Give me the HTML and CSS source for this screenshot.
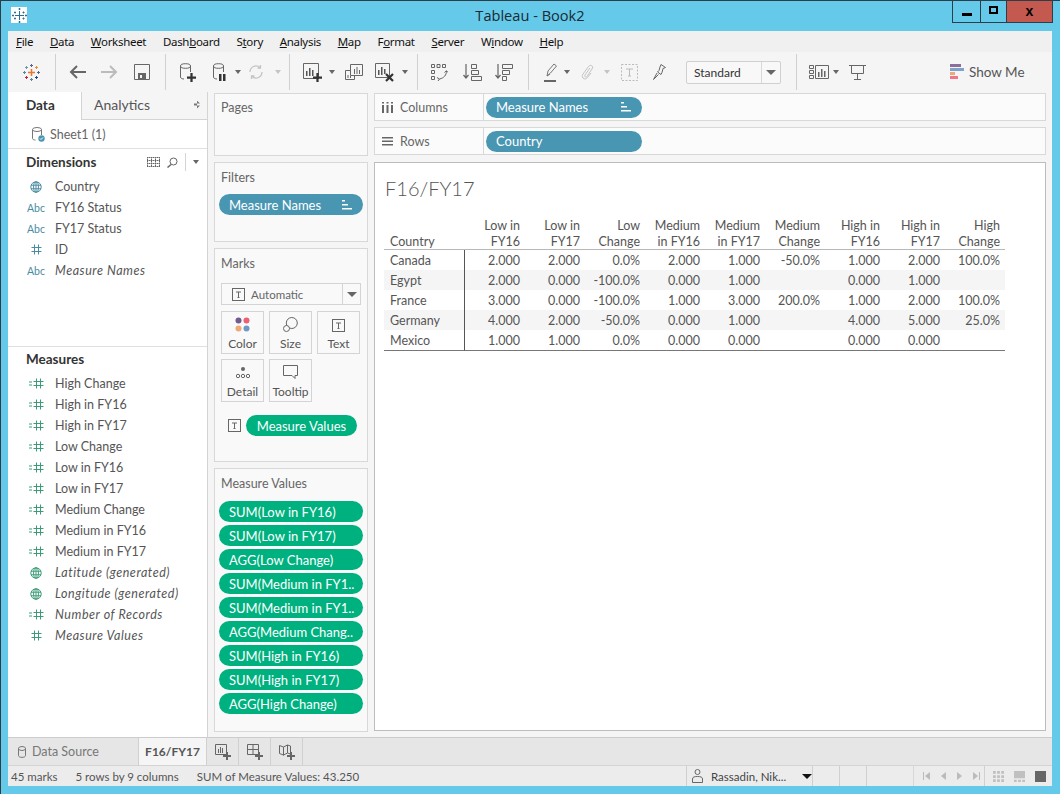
FILE: index.html
```html
<!DOCTYPE html>
<html lang="en">
<head>
<meta charset="utf-8">
<title>Tableau - Book2</title>
<link rel="stylesheet" href="styles.css">
</head>
<body>
<svg class="defs" width="0" height="0">
  <symbol id="globe" viewBox="0 0 12 12"><g fill="none" stroke="currentColor" stroke-width="1"><circle cx="6" cy="6" r="5.2"/><ellipse cx="6" cy="6" rx="2.4" ry="5.2"/><path d="M1 4.2h10M1 7.8h10M6 .8v10.4"/></g></symbol>
  <symbol id="hash" viewBox="0 0 11 11"><path d="M3.5 .5v10M7.5 .5v10M.5 3.5h10M.5 7.5h10" fill="none" stroke="currentColor"/></symbol>
  <symbol id="mhash" viewBox="0 0 15 11"><path d="M0 4h3M0 7h3M7.5 .5v10M11.5 .5v10M4.500 3.500h10M4.500 7.500h10" fill="none" stroke="currentColor"/></symbol>
  <symbol id="sort" viewBox="0 0 12 10"><path d="M1 0h3v1.500H1zM1 4h6v1.500H1zM1 8h10v1.500H1z" fill="currentColor"/></symbol>
  <symbol id="tbox" viewBox="0 0 13 13"><rect x=".5" y=".5" width="12" height="12" fill="none" stroke="currentColor"/><path d="M4 4h5M6.500 4v5.500M5.500 9.500h2" fill="none" stroke="currentColor"/></symbol>
  <symbol id="plus" viewBox="0 0 8 8"><path d="M3 0h2v3h3v2H5v3H3V5H0V3h3z" fill="currentColor"/></symbol>
  <symbol id="drum" viewBox="0 0 14 19"><g fill="none" stroke="currentColor"><ellipse cx="6.500" cy="3" rx="5" ry="2.300"/><path d="M1.500 3v11c0 1.500 2 2 3.500 2M11.500 3v6"/></g></symbol>
</svg>

<div class="window">
  <header class="titlebar">
    <span class="app-icon"><svg width="15" height="15" viewBox="0 0 15 15"><path d="M7.500 3v9M3 7.500h9M3 3.500v2M2 4.500h2M11.500 3.500v2M10.500 4.500h2M3 9.500v2M2 10.500h2M11.500 9.500v2M10.500 10.500h2M7.500 0v2M6.500 1h2M7.500 13v2M6.500 14h2M0 7.500h2M1 6.500v2M13 7.500h2M14 6.500v2" stroke="#2f6d93" fill="none"/></svg></span>
    <h1 class="title">Tableau - Book2</h1>
    <div class="winctl">
      <span class="wbtn w-min"><i class="g-min"></i></span>
      <span class="wbtn w-max"><i class="g-max"></i></span>
      <span class="wbtn w-close">x</span>
    </div>
  </header>

  <div class="client">
    <nav class="menubar">
      <span class="mi"><u>F</u>ile</span>
      <span class="mi"><u>D</u>ata</span>
      <span class="mi"><u>W</u>orksheet</span>
      <span class="mi">Dash<u>b</u>oard</span>
      <span class="mi">S<u>t</u>ory</span>
      <span class="mi"><u>A</u>nalysis</span>
      <span class="mi"><u>M</u>ap</span>
      <span class="mi">F<u>o</u>rmat</span>
      <span class="mi"><u>S</u>erver</span>
      <span class="mi">W<u>i</u>ndow</span>
      <span class="mi"><u>H</u>elp</span>
    </nav>

    <div class="toolbar">
      <svg class="t t-logo" width="17" height="17" viewBox="0 0 17 17"><g fill="none" stroke-width="1">
        <path d="M8.500 5v7M5 8.500h7" stroke="#e8762d" stroke-width="1.500"/>
        <path d="M8.500 0v3M7 1.500h3" stroke="#5b6591"/>
        <path d="M8.500 14v3M7 15.500h3" stroke="#5b879b"/>
        <path d="M0 8.500h3M1.500 7v3" stroke="#59879b"/>
        <path d="M14 8.500h3M15.500 7v3" stroke="#5b6591"/>
        <path d="M3.500 2v3M2 3.500h3" stroke="#7099a6"/>
        <path d="M13.500 2v3M12 3.500h3" stroke="#eb912b"/>
        <path d="M3.500 12v3M2 13.500h3" stroke="#c72035"/>
        <path d="M13.500 12v3M12 13.500h3" stroke="#1f457e"/></g></svg>
      <i class="sep s1"></i>
      <svg class="t t-back" width="17" height="14" viewBox="0 0 17 14"><path d="M17 7H2M8 1L2 7l6 6" fill="none" stroke="#666" stroke-width="2"/></svg>
      <svg class="t t-fwd" width="17" height="14" viewBox="0 0 17 14"><path d="M0 7h15M9 1l6 6-6 6" fill="none" stroke="#bbb" stroke-width="2"/></svg>
      <svg class="t t-save" width="16" height="16" viewBox="0 0 16 16"><path d="M.5 .5h15v15H.5z" fill="none" stroke="#666"/><path d="M4 9h8v6H4z" fill="#666"/><path d="M6 11h2v3H6z" fill="#f5f5f5"/></svg>
      <i class="sep s2"></i>
      <svg class="t t-db" width="17" height="19" viewBox="0 0 17 19"><use href="#drum" width="14" height="19" class="c-dark"/><use href="#plus" x="8" y="10" width="9" height="9" class="c-black"/></svg>
      <svg class="t t-dbp" width="14" height="19" viewBox="0 0 14 19"><use href="#drum" width="14" height="19" class="c-dark"/><path d="M7 11h2.500v7H7zM11 11h2.500v7H11z" fill="#333"/></svg>
      <i class="caret c1"></i>
      <svg class="t t-ref" width="16" height="16" viewBox="0 0 16 16"><path d="M2 8a6 6 0 0 1 10-4.500M14 8a6 6 0 0 1-10 4.500M12.500 1v3h-3M3.500 15v-3h3" fill="none" stroke="#c4c4c4" stroke-width="1.300"/></svg>
      <i class="caret c2 off"></i>
      <i class="sep s3"></i>
      <svg class="t t-new" width="19" height="19" viewBox="0 0 19 19"><path d="M.5 .5h15v15H.5z" fill="none" stroke="#666"/><path d="M3 8h1.500v5H3zM6 5h1.500v8H6zM9 7h1.500v6H9z" fill="#555"/><use href="#plus" x="10" y="10" width="9" height="9" class="c-black"/></svg>
      <i class="caret c3"></i>
      <svg class="t t-dup" width="18" height="17" viewBox="0 0 18 17"><path d="M5.500 .5h12v11h-12zM.5 6.500h5M.5 6.500v9h9v-4" fill="none" stroke="#666"/><path d="M9 5h1v5H9zM11.500 3h1v7h-1zM14 6h1v4h-1zM2.500 11h1v3h-1zM5 12h1v2H5z" fill="#666"/></svg>
      <svg class="t t-clr" width="20" height="19" viewBox="0 0 20 19"><path d="M.5 .5h14v14H.5z" fill="none" stroke="#666"/><path d="M3 7h1.500v5H3zM6 4h1.500v8H6zM9 6h1.500v5H9z" fill="#555"/><path d="M11 11l7 7M18 11l-7 7" stroke="#333" stroke-width="2.200"/></svg>
      <i class="caret c4"></i>
      <i class="sep s4"></i>
      <svg class="t t-swap" width="17" height="17" viewBox="0 0 17 17"><g fill="none" stroke="#666"><path d="M.5 .5h3v3h-3zM6 .5h3v3H6zM11.500 .5h3v3h-3zM.5 6.500h3v3h-3zM.5 12.500h3v3h-3z"/><path d="M15.500 7c0 4-2.500 7-7 8M6 13.500l2.500 1.500-1.500 2M13.500 8.500l2-1.800 1.500 1.800"/></g></svg>
      <svg class="t t-sa" width="19" height="17" viewBox="0 0 19 17"><g fill="none" stroke="#666"><path d="M3 0v14M.5 11l2.500 3 2.500-3" stroke-width="1.200"/><path d="M8.500 .5h5v4h-5zM8.500 6.500h7v4h-7zM8.500 12.500h10v4h-10z"/></g></svg>
      <svg class="t t-sd" width="18" height="17" viewBox="0 0 18 17"><g fill="none" stroke="#666"><path d="M3 0v14M.5 11l2.500 3 2.500-3" stroke-width="1.200"/><path d="M7.500 .5h10v4h-10zM7.500 6.500h7v4h-7zM7.500 12.500h4v4h-4z"/></g></svg>
      <i class="sep s5"></i>
      <svg class="t t-hl" width="13" height="19" viewBox="0 0 13 19"><path d="M3 13l1-5 6-7 2.500 2-6 7zM3 13l3-2" fill="none" stroke="#777"/><path d="M0 17h12v2H0z" fill="#666"/></svg>
      <i class="caret c5"></i>
      <svg class="t t-clip" width="13" height="17" viewBox="0 0 13 17"><path d="M9 4L4 11c-1 1.500 1 3 2 1.500l5-7.500c2-3-1.500-5-3.500-2.500L2 10c-2.500 3.500 2 7 4.500 3.500L10 9" fill="none" stroke="#c4c4c4"/></svg>
      <i class="caret c6 off"></i>
      <svg class="t t-annot" width="17" height="17" viewBox="0 0 17 17"><rect x=".5" y=".5" width="16" height="16" fill="none" stroke="#bbb" stroke-dasharray="2 1.500"/><path d="M5 5h7M8.500 5v7M7 12h3" fill="none" stroke="#bbb"/></svg>
      <svg class="t t-pin" width="13" height="16" viewBox="0 0 13 16"><path d="M8 .5l4.500 3-2.500 1-1 4-1 2-3.500-2.500 1.500-1.500 1-3.500zM4 9l-3.500 6.500 5-5" fill="none" stroke="#666"/></svg>
      <div class="fit"><span class="fit-label">Standard</span><span class="fit-arrow"><i class="caret big"></i></span></div>
      <i class="sep s6"></i>
      <svg class="t t-card" width="20" height="14" viewBox="0 0 20 14"><g fill="none" stroke="#666"><path d="M.5 .5h4v3h-4zM.5 5.500h4v3h-4zM.5 10.500h4v3h-4zM6.500 .5h13v13h-13z"/></g><path d="M9 7h1.500v5H9zM12 4h1.500v8H12zM15 6h1.500v6H15z" fill="#666"/></svg>
      <i class="caret c7"></i>
      <svg class="t t-pres" width="17" height="16" viewBox="0 0 17 16"><g fill="none" stroke="#666"><path d="M2.500 1.500h12v8h-12zM0 1.500h17M8.500 9.500V15M5 15.500h7"/></g></svg>
      <span class="showme">
        <svg width="14" height="16" viewBox="0 0 14 16"><path d="M0 0h11v3H0z" fill="#8a6f9b"/><path d="M0 4h14v3H0z" fill="#7fa2c8"/><path d="M0 8h5v3H0z" fill="#f0a878"/><path d="M0 12h8v3H0z" fill="#f2768a"/></svg>
        Show Me
      </span>
    </div>

    <main class="main">
      <aside class="datapane">
        <div class="tabs">
          <span class="tab active">Data</span>
          <span class="tab">Analytics<i class="updown"></i></span>
        </div>
        <div class="source">
          <svg width="15" height="15" viewBox="0 0 15 15"><g fill="none" stroke="#777"><ellipse cx="6" cy="2.500" rx="4.500" ry="2"/><path d="M1.500 2.500v9c0 1 1.500 1.500 3 1.500M10.500 2.500V8"/></g><circle cx="10.500" cy="11.500" r="3.200" fill="#4996b2"/><path d="M9 11.500l1 1 2-2" stroke="#fff" fill="none"/></svg>
          <span>Sheet1 (1)</span>
        </div>
        <section class="dims">
          <div class="pane-head">
            <h2>Dimensions</h2>
            <span class="head-tools">
              <svg width="13" height="11" viewBox="0 0 13 11"><path d="M0 .5h13M0 3.500h13M0 6.500h13M0 9.500h13M.5 0v10M4.500 0v10M8.500 0v10M12.500 0v10" stroke="#666" stroke-dasharray="1.500 .5" fill="none"/></svg>
              <svg width="11" height="11" viewBox="0 0 11 11"><circle cx="6.500" cy="4.500" r="3.500" fill="none" stroke="#666"/><path d="M4 7.500L.5 10.500" stroke="#666" stroke-width="1.500"/></svg>
              <i class="vline"></i>
              <i class="caret"></i>
            </span>
          </div>
          <ul class="fields dim">
            <li><span class="fi"><svg width="12" height="12"><use href="#globe"/></svg></span>Country</li>
            <li><span class="fi abc">Abc</span>FY16 Status</li>
            <li><span class="fi abc">Abc</span>FY17 Status</li>
            <li><span class="fi"><svg width="11" height="11"><use href="#hash"/></svg></span>ID</li>
            <li class="gen"><span class="fi abc">Abc</span>Measure Names</li>
          </ul>
        </section>
        <section class="meas">
          <div class="pane-head"><h2>Measures</h2></div>
          <ul class="fields mea">
            <li><span class="fi"><svg width="15" height="11"><use href="#mhash"/></svg></span>High Change</li>
            <li><span class="fi"><svg width="15" height="11"><use href="#mhash"/></svg></span>High in FY16</li>
            <li><span class="fi"><svg width="15" height="11"><use href="#mhash"/></svg></span>High in FY17</li>
            <li><span class="fi"><svg width="15" height="11"><use href="#mhash"/></svg></span>Low Change</li>
            <li><span class="fi"><svg width="15" height="11"><use href="#mhash"/></svg></span>Low in FY16</li>
            <li><span class="fi"><svg width="15" height="11"><use href="#mhash"/></svg></span>Low in FY17</li>
            <li><span class="fi"><svg width="15" height="11"><use href="#mhash"/></svg></span>Medium Change</li>
            <li><span class="fi"><svg width="15" height="11"><use href="#mhash"/></svg></span>Medium in FY16</li>
            <li><span class="fi"><svg width="15" height="11"><use href="#mhash"/></svg></span>Medium in FY17</li>
            <li class="gen"><span class="fi"><svg width="12" height="12"><use href="#globe"/></svg></span>Latitude (generated)</li>
            <li class="gen"><span class="fi"><svg width="12" height="12"><use href="#globe"/></svg></span>Longitude (generated)</li>
            <li class="gen"><span class="fi"><svg width="15" height="11"><use href="#mhash"/></svg></span>Number of Records</li>
            <li class="gen"><span class="fi"><svg width="11" height="11"><use href="#hash"/></svg></span>Measure Values</li>
          </ul>
        </section>
      </aside>

      <div class="workspace">
        <div class="cards">
          <section class="card pages"><h3>Pages</h3></section>
          <section class="card filters">
            <h3>Filters</h3>
            <div class="pill blue wide">Measure Names<svg width="12" height="10"><use href="#sort"/></svg></div>
          </section>
          <section class="card marks">
            <h3>Marks</h3>
            <div class="marktype">
              <span class="mt-label"><svg width="13" height="13"><use href="#tbox"/></svg>Automatic</span>
              <span class="mt-arrow"><i class="caret big"></i></span>
            </div>
            <div class="markgrid">
              <div class="mbtn">
                <svg width="15" height="15" viewBox="0 0 15 15"><circle cx="3.500" cy="3.500" r="3" fill="#6f5b8e"/><circle cx="11.500" cy="3.500" r="3" fill="#ef5f73"/><circle cx="3.500" cy="11.500" r="3" fill="#f0a878"/><circle cx="11.500" cy="11.500" r="3" fill="#6f98c6"/></svg>
                <span>Color</span>
              </div>
              <div class="mbtn">
                <svg width="15" height="15" viewBox="0 0 15 15"><g fill="none" stroke="#666"><circle cx="8.800" cy="6" r="5.500"/><circle cx="3.500" cy="11.500" r="3" fill="#f9f9f9"/></g></svg>
                <span>Size</span>
              </div>
              <div class="mbtn">
                <svg width="13" height="13"><use href="#tbox"/></svg>
                <span>Text</span>
              </div>
              <div class="mbtn">
                <svg width="14" height="15" viewBox="0 0 14 15"><circle cx="7" cy="4" r="2" fill="#666"/><g fill="none" stroke="#666"><circle cx="2" cy="11" r="1.700"/><circle cx="7" cy="11" r="1.700"/><circle cx="12" cy="11" r="1.700"/></g></svg>
                <span>Detail</span>
              </div>
              <div class="mbtn">
                <svg width="15" height="15" viewBox="0 0 15 15"><path d="M.5 .5h14v10h-2.500v3l-3-3H.5z" fill="none" stroke="#666"/></svg>
                <span>Tooltip</span>
              </div>
            </div>
            <div class="markpill">
              <svg width="13" height="13"><use href="#tbox"/></svg>
              <div class="pill green">Measure Values</div>
            </div>
          </section>
          <section class="card mvalues">
            <h3>Measure Values</h3>
            <div class="pillstack">
              <div class="pill green wide">SUM(Low in FY16)</div>
              <div class="pill green wide">SUM(Low in FY17)</div>
              <div class="pill green wide">AGG(Low Change)</div>
              <div class="pill green wide">SUM(Medium in FY1..</div>
              <div class="pill green wide">SUM(Medium in FY1..</div>
              <div class="pill green wide">AGG(Medium Chang..</div>
              <div class="pill green wide">SUM(High in FY16)</div>
              <div class="pill green wide">SUM(High in FY17)</div>
              <div class="pill green wide">AGG(High Change)</div>
            </div>
          </section>
        </div>

        <div class="viewcol">
          <div class="shelf s-cols">
            <div class="shelf-label"><svg width="11" height="11" viewBox="0 0 11 11"><path d="M0 3h2v8H0zM4.500 3h2v8h-2zM9 3h2v8H9zM0 0h2v1.500H0zM4.500 0h2v1.500h-2zM9 0h2v1.500H9z" fill="#666"/></svg>Columns</div>
            <div class="shelf-body"><div class="pill blue shelfpill">Measure Names<svg width="12" height="10"><use href="#sort"/></svg></div></div>
          </div>
          <div class="shelf s-rows">
            <div class="shelf-label"><svg width="11" height="9" viewBox="0 0 11 9"><path d="M0 0h11v1.500H0zM0 3.500h11V5H0zM0 7h11v1.500H0z" fill="#666"/></svg>Rows</div>
            <div class="shelf-body"><div class="pill blue shelfpill">Country</div></div>
          </div>
          <section class="viz">
            <h2 class="viz-title">F16/FY17</h2>
            <table class="crosstab">
              <thead>
                <tr>
                  <th class="rowhead">Country</th>
                  <th>Low in<br>FY16</th><th>Low in<br>FY17</th><th>Low<br>Change</th>
                  <th>Medium<br>in FY16</th><th>Medium<br>in FY17</th><th>Medium<br>Change</th>
                  <th>High in<br>FY16</th><th>High in<br>FY17</th><th>High<br>Change</th>
                </tr>
              </thead>
              <tbody>
                <tr><td class="rowhead">Canada</td><td>2.000</td><td>2.000</td><td>0.0%</td><td>2.000</td><td>1.000</td><td>-50.0%</td><td>1.000</td><td>2.000</td><td>100.0%</td></tr>
                <tr><td class="rowhead">Egypt</td><td>2.000</td><td>0.000</td><td>-100.0%</td><td>0.000</td><td>1.000</td><td></td><td>0.000</td><td>1.000</td><td></td></tr>
                <tr><td class="rowhead">France</td><td>3.000</td><td>0.000</td><td>-100.0%</td><td>1.000</td><td>3.000</td><td>200.0%</td><td>1.000</td><td>2.000</td><td>100.0%</td></tr>
                <tr><td class="rowhead">Germany</td><td>4.000</td><td>2.000</td><td>-50.0%</td><td>0.000</td><td>1.000</td><td></td><td>4.000</td><td>5.000</td><td>25.0%</td></tr>
                <tr><td class="rowhead">Mexico</td><td>1.000</td><td>1.000</td><td>0.0%</td><td>0.000</td><td>0.000</td><td></td><td>0.000</td><td>0.000</td><td></td></tr>
              </tbody>
            </table>
          </section>
        </div>
      </div>
    </main>

    <div class="sheetbar">
      <span class="sheet ds"><svg width="10" height="12" viewBox="0 0 10 12"><g fill="none" stroke="#777"><ellipse cx="5" cy="2.500" rx="3.500" ry="2"/><path d="M1.500 2.500v7c0 2.500 7 2.500 7 0v-7"/></g></svg>Data Source</span>
      <span class="sheet current">F16/FY17</span>
      <span class="sheet add"><svg width="16" height="16" viewBox="0 0 16 16"><path d="M.5 .5h11v10H.5z" fill="none" stroke="#666"/><path d="M3 5h1v4H3zM5 3h1v6H5zM7 4h1v5H7z" fill="#666"/><use href="#plus" x="8" y="8" width="8" height="8" class="c-grey"/></svg></span>
      <span class="sheet add"><svg width="16" height="16" viewBox="0 0 16 16"><path d="M.5 .5h11v10H.5zM6 .5v10M.5 5.500h11" fill="none" stroke="#666"/><use href="#plus" x="8" y="8" width="8" height="8" class="c-grey"/></svg></span>
      <span class="sheet add"><svg width="16" height="16" viewBox="0 0 16 16"><path d="M.5 1.500l4 1.500 4-2 3 1v8l-3-1-4 2-4-1.500zM4.500 3v8.500M8.500 1v8" fill="none" stroke="#666"/><use href="#plus" x="8" y="8" width="8" height="8" class="c-grey"/></svg></span>
    </div>

    <footer class="status">
      <span class="st st1">45 marks</span>
      <span class="st st2">5 rows by 9 columns</span>
      <span class="st st3">SUM of Measure Values: 43.250</span>
      <span class="st-user">
        <svg width="11" height="14" viewBox="0 0 11 14"><g fill="none" stroke="#666"><circle cx="5.500" cy="3" r="2.500"/><path d="M.5 13.500V10c0-2 2-2.500 5-2.500s5 .5 5 2.500v3.500z"/></g></svg>
        <span class="uname">Rassadin, Nik...</span><i class="caret dark"></i>
      </span>
      <span class="st-cell"></span>
      <span class="st-cell"></span>
      <span class="st-nav">
        <svg width="7" height="8" viewBox="0 0 7 8"><path d="M0 0h1v8H0zM7 0v8L2 4z" fill="#bbb"/></svg>
        <svg width="5" height="8" viewBox="0 0 5 8"><path d="M5 0v8L0 4z" fill="#bbb"/></svg>
        <svg width="5" height="8" viewBox="0 0 5 8"><path d="M0 0v8l5-4z" fill="#bbb"/></svg>
        <svg width="7" height="8" viewBox="0 0 7 8"><path d="M6 0h1v8H6zM0 0v8l5-4z" fill="#bbb"/></svg>
      </span>
      <span class="st-views">
        <svg width="11" height="11" viewBox="0 0 12 12"><path d="M0 0h3v3H0zM4.500 0h3v3h-3zM9 0h3v3H9zM0 4.500h3v3H0zM4.500 4.500h3v3h-3zM9 4.500h3v3H9zM0 9h3v3H0zM4.500 9h3v3h-3zM9 9h3v3H9z" fill="#c0c0c0"/></svg>
        <svg width="11" height="11" viewBox="0 0 12 12"><path d="M0 0h12v8H0zM0 9.500h3V12H0zM4.500 9.500h3V12h-3zM9 9.500h3V12H9z" fill="#c0c0c0"/></svg>
        <svg width="11" height="11" viewBox="0 0 12 12"><path d="M0 0h12v12H0z" fill="#666"/></svg>
      </span>
    </footer>
  </div>
</div>
</body>
</html>
```
FILE: styles.css
```css
* { box-sizing: border-box; }
html, body { margin: 0; padding: 0; height: 100%; overflow: hidden; }
body { font-family: Lato, "Open Sans", sans-serif; font-size: 13px; color: #555; }
.defs { display: block; height: 0; }
h1, h2, h3, ul { margin: 0; padding: 0; font-weight: normal; }
ul { list-style: none; }
i { display: block; font-style: normal; flex: none; }
svg { display: block; flex: none; }
.c-dark { color: #666; }
.c-black { color: #333; }
.c-grey { color: #666; }
.card svg, .shelf svg { color: #666; }
.pill svg { color: #fff; }

.window { width: 1060px; height: 794px; display: flex; flex-direction: column; background: #65c9ea; border-left: 1px solid #2d3e48; border-top: 1px solid #2d3e48; padding: 0 8px 8px 7px; }
.titlebar { height: 30px; flex: none; display: flex; align-items: flex-start; position: relative; }
.app-icon { width: 16px; height: 16px; margin: 6px 0 0 3px; background: #fff; display: flex; align-items: center; justify-content: center; }
.title { position: absolute; left: 0; right: 0; top: 4px; text-align: center; font-family: "Open Sans", "Noto Sans", sans-serif; font-size: 14.600px; line-height: 21px; color: #1a2a33; }
.winctl { margin-left: auto; margin-right: -1px; display: flex; height: 22px; border: 1px solid #2d3e48; border-top: 0; position: relative; }
.wbtn { display: flex; align-items: center; justify-content: center; height: 21px; }
.w-min { width: 28px; border-right: 1px solid #2d3e48; }
.w-max { width: 26px; border-right: 1px solid #2d3e48; }
.w-close { width: 45px; background: #c4594f; color: #000; font: bold 14px/19px "Liberation Sans", sans-serif; }
.g-min { width: 10px; height: 3px; background: #000; margin-top: 5px; }
.g-max { width: 9px; height: 8px; border: 2px solid #000; margin-top: -3px; }

.client { flex: 1; min-height: 0; display: flex; flex-direction: column; background: #f5f5f5; }
.menubar { height: 21px; flex: none; background: #f0f0f0; display: flex; align-items: center; font-family: "Noto Sans", "Open Sans", sans-serif; color: #111; padding-left: 8px; }
.mi { margin-right: 16.700px; line-height: 21px; white-space: nowrap; font-size: 11.500px; letter-spacing: -.3px; }

.toolbar { height: 40px; flex: none; display: flex; align-items: center; background: #f5f5f5; }
.sep { width: 1px; height: 36px; background: #d0d0d0; }
.caret { width: 0; height: 0; border-left: 3.500px solid transparent; border-right: 3.500px solid transparent; border-top: 4px solid #666; }
.caret.off { border-top-color: #c4c4c4; }
.caret.big { border-left-width: 5px; border-right-width: 5px; border-top-width: 5px; }
.caret.dark { border-left-width: 5px; border-right-width: 5px; border-top: 5px solid #111; }
.t-logo { margin-left: 15px; }
.s1 { margin-left: 15px; }
.t-back { margin-left: 13px; }
.t-fwd { margin-left: 15px; }
.t-save { margin-left: 16px; }
.s2 { margin-left: 15px; }
.t-db { margin-left: 13px; }
.t-dbp { margin-left: 16px; }
.c1 { margin-left: 8.500px; }
.t-ref { margin-left: 7.500px; }
.c2 { margin-left: 10.500px; }
.s3 { margin-left: 8.500px; }
.t-new { margin-left: 13px; }
.c3 { margin-left: 6.500px; }
.t-dup { margin-left: 10.500px; }
.t-clr { margin-left: 12px; }
.c4 { margin-left: 6.500px; }
.s4 { margin-left: 9.500px; }
.t-swap { margin-left: 13px; }
.t-sa { margin-left: 15px; }
.t-sd { margin-left: 13px; }
.s5 { margin-left: 15px; }
.t-hl { margin-left: 15px; }
.c5 { margin-left: 6.500px; }
.t-clip { margin-left: 11.500px; }
.c6 { margin-left: 9.500px; }
.t-annot { margin-left: 11.500px; }
.t-pin { margin-left: 15px; }
.fit { margin-left: 20px; width: 95px; flex: none; height: 23px; border: 1px solid #d0d0d0; border-radius: 2px; background: #f8f8f8; display: flex; color: #333; font-size: 12px; line-height: 21px; }
.fit-label { flex: 1; padding-left: 7px; border-right: 1px solid #d8d8d8; }
.fit-arrow { width: 18px; display: flex; align-items: center; justify-content: center; }
.s6 { margin-left: 15px; }
.t-card { margin-left: 12px; }
.c7 { margin-left: 3.500px; }
.t-pres { margin-left: 10.500px; }
.showme { margin-left: 84px; display: flex; align-items: center; gap: 5px; font-size: 13.500px; color: #555; }

.main { flex: 1; min-height: 0; display: flex; }
.datapane { width: 200px; flex: none; background: #fff; border-right: 1px solid #d4d4d4; display: flex; flex-direction: column; }
.tabs { height: 28px; flex: none; display: flex; }
.tab { display: flex; align-items: center; padding-bottom: 2px; font-size: 14px; color: #555; position: relative; }
.tab.active { width: 73px; padding-left: 18px; font-weight: bold; color: #333; font-size: 13.500px; }
.tab:not(.active) { flex: 1; padding-left: 12px; background: #f5f5f5; border-left: 1px solid #d4d4d4; border-bottom: 1px solid #d4d4d4; }
.updown { margin-left: auto; margin-right: 7px; height: 8px; width: 6px; background: #777; clip-path: polygon(50% 0, 100% 37%, 0 37%, 0 63%, 100% 63%, 50% 100%); }
.source { height: 29px; flex: none; display: flex; align-items: center; gap: 4px; padding-left: 23px; border-bottom: 1px solid #e0e0e0; font-size: 12.500px; color: #666; }
.dims { height: 198px; flex: none; border-bottom: 1px solid #e0e0e0; padding-top: 1px; }
.pane-head { height: 24px; display: flex; align-items: center; padding-left: 18px; margin-bottom: 2px; }
.pane-head h2 { font-size: 13.500px; font-weight: bold; color: #333; }
.head-tools { margin-left: auto; display: flex; align-items: center; gap: 7px; padding-right: 8px; }
.vline { width: 1px; height: 18px; background: #d4d4d4; }
.fields li { height: 21px; display: flex; align-items: center; font-size: 12.500px; color: #555; white-space: nowrap; }
.fields li.gen { font-style: italic; letter-spacing: .55px; }
.fi { width: 47px; flex: none; display: flex; justify-content: center; padding-left: 9px; letter-spacing: 0; }
.dim .fi { color: #4a8ca3; }
.mea .fi { color: #3d9c78; }
.abc { font-size: 10.500px; font-style: normal; color: #4a8ca3; }
.meas { flex: 1; }

.workspace { flex: 1; min-width: 0; display: flex; padding: 1px 6px 0; gap: 6px; background: #f5f5f5; }
.cards { width: 154px; flex: none; display: flex; flex-direction: column; gap: 6px; }
.card { flex: none; background: #f9f9f9; border: 1px solid #d8d8d8; padding: 0 6px; }
.card h3 { font-size: 12.500px; color: #666; padding-top: 7px; line-height: 15px; }
.pages h3 { padding-top: 6px; }
.pages { height: 63px; }
.filters { height: 80px; }
.filters .pill { margin: 9px -2px 0 -2px; }
.marks { height: 214px; }
.mvalues { height: 264px; }
.pill { display: flex; align-items: center; justify-content: space-between; color: #fff; font-size: 13px; border-radius: 11px; height: 21px; padding: 0 10px; white-space: nowrap; }
.pill.blue { background: #4996b2; }
.pill.green { background: #00b180; }
.marktype { margin: 12px 0 0 0; height: 22px; border: 1px solid #d4d4d4; display: flex; font-size: 11.500px; color: #666; }
.mt-label { flex: 1; display: flex; align-items: center; gap: 6px; padding-left: 10px; border-right: 1px solid #d4d4d4; }
.mt-arrow { width: 17px; display: flex; align-items: center; justify-content: center; }
.markgrid { display: grid; grid-template-columns: 43px 43px 43px; column-gap: 5px; row-gap: 5px; margin-top: 6px; }
.mbtn { height: 43px; border: 1px solid #d4d4d4; display: flex; flex-direction: column; align-items: center; justify-content: flex-end; padding-bottom: 2px; gap: 4px; font-size: 12px; color: #555; }
.mbtn span { line-height: 15px; }
.markpill { display: flex; align-items: center; margin: 13px 0 0 0; padding-left: 7px; gap: 5px; }
.markpill .pill { width: 111px; height: 21px; justify-content: center; padding: 0; }
.mvalues .pillstack { display: flex; flex-direction: column; gap: 3px; margin: 10px -2px 0 -2px; }
.mvalues .pill { justify-content: flex-start; }

.viewcol { flex: 1; min-width: 0; display: flex; flex-direction: column; }
.shelf { flex: none; display: flex; background: #fbfbfb; border: 1px solid #d8d8d8; height: 28px; align-items: center; }
.s-rows { margin-top: 6px; }
.shelf-label { width: 109px; height: 100%; display: flex; align-items: center; gap: 7px; padding-left: 7px; border-right: 1px solid #d8d8d8; font-size: 12.500px; color: #666; }
.shelf-body { padding-left: 2px; }
.shelfpill { width: 156px; }
.viz { flex: 1; margin: 7px 0 6px; background: #fff; border: 1px solid #bdbdbd; padding: 12px 0 0 10px; }
.viz-title { font-size: 20px; line-height: 26px; color: #555; font-weight: 300; }
.crosstab { border-collapse: separate; border-spacing: 0; table-layout: fixed; width: 621px; margin: 15px 0 0 -1px; font-size: 12.500px; color: #555; }
.crosstab th { width: 60px; font-weight: normal; text-align: right; padding: 0 5px 0 0; line-height: 16px; vertical-align: bottom; height: 34px; box-shadow: inset 0 -1px 0 #b8b8b8; }
.crosstab td { height: 20px; padding: 2px 5px 0 0; text-align: right; line-height: 18px; }
.crosstab .rowhead { width: 81px; text-align: left; padding-left: 6px; border-right: 1px solid #555; }
.crosstab thead .rowhead { border-right: 0; }
.crosstab tbody tr:nth-child(even) td { background: #f5f5f5; }
.crosstab tbody tr:last-child td { border-bottom: 1px solid #777; height: 21px; }

.sheetbar { height: 29px; flex: none; display: flex; background: #e6e6e6; border-top: 1px solid #ccc; border-bottom: 1px solid #d4d4d4; }
.sheet { display: flex; align-items: center; justify-content: center; border-right: 1px solid #d0d0d0; }
.ds { width: 131px; justify-content: flex-start; padding-left: 9px; gap: 5px; font-size: 12.500px; color: #777; }
.current { width: 68px; background: #f5f5f5; color: #555; font-weight: bold; font-size: 12px; }
.add { width: 32px; }

.status { height: 20px; flex: none; display: flex; align-items: stretch; background: #ececec; font-size: 11.500px; color: #555; }
.st { display: flex; align-items: center; }
.st1 { margin-left: 3px; }
.st2 { margin-left: 18px; }
.st3 { margin-left: 18px; }
.st-user { margin-left: auto; width: 127px; display: flex; align-items: center; border-left: 1px solid #d0d0d0; border-right: 1px solid #d0d0d0; padding-left: 5px; gap: 8px; }
.uname { width: 87px; white-space: nowrap; color: #444; }
.st-cell { width: 27px; border-right: 1px solid #d0d0d0; }
.st-nav { width: 72px; margin-left: 46px; display: flex; align-items: center; justify-content: flex-start; gap: 11px; padding-left: 9px; border-left: 1px solid #d8d8d8; border-right: 1px solid #d0d0d0; }
.st-views { width: 67px; display: flex; align-items: center; gap: 10px; padding-left: 8px; }
```
